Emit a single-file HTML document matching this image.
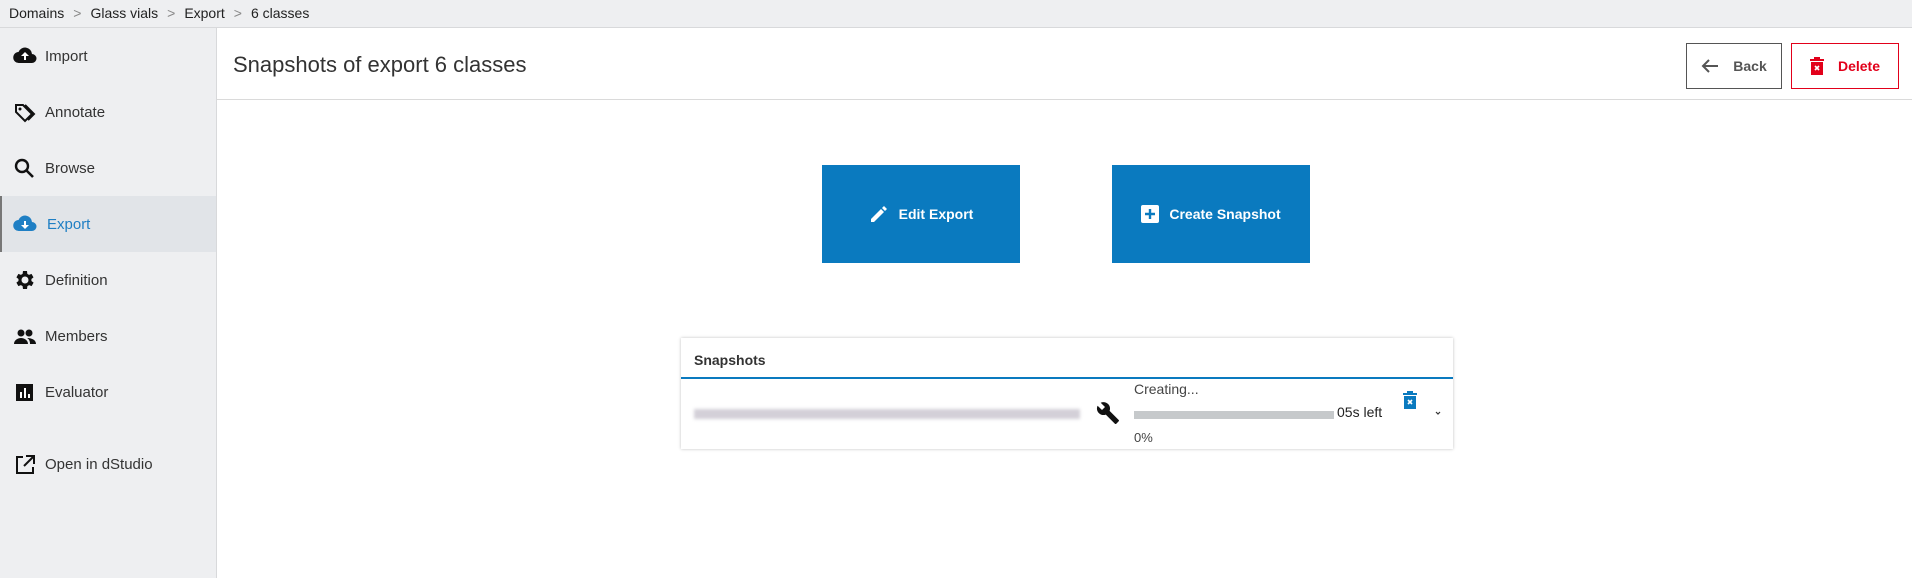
<!DOCTYPE html>
<html><head><style>
*{box-sizing:border-box;margin:0;padding:0}
body{width:1912px;height:578px;overflow:hidden;font-family:"Liberation Sans",sans-serif;background:#fff;color:#222;position:relative}
.bc{position:absolute;left:0;top:0;width:1912px;height:28px;background:#eeeff1;border-bottom:1px solid #d8d9db;font-size:14px;line-height:27px;padding-left:9px;color:#222}
.bc span.s{color:#888;margin:0 9px}
.sb{position:absolute;left:0;top:28px;width:217px;height:550px;background:#eeeff1;border-right:1px solid #d8d9db}
.it{position:absolute;left:0;width:216px;height:56px;font-size:15px;color:#333;display:flex;align-items:center;padding-left:45px}
.it svg{position:absolute;left:13px;top:18px}
.it.act{background:#e1e4e8;color:#1f7fc4;border-left:2px solid #777}
.hd{position:absolute;left:217px;top:28px;right:0;height:72px;border-bottom:1px solid #dadada}
.hd h1{position:absolute;left:16px;top:24px;font-size:22px;font-weight:normal;color:#333}
.btn{position:absolute;top:15px;height:46px;font-size:14px;font-weight:bold;display:flex;align-items:center;justify-content:center;gap:14px}
.big{position:absolute;top:165px;width:198px;height:98px;background:#0a7abf;color:#fff;font-weight:bold;font-size:14px;display:flex;align-items:center;justify-content:center;gap:10px}
.card{position:absolute;left:681px;top:338px;width:772px;height:111px;box-shadow:0 0 3px rgba(0,0,0,.25);background:#fff}
</style></head><body>
<div class="bc">Domains<span class="s">&gt;</span>Glass vials<span class="s">&gt;</span>Export<span class="s">&gt;</span>6 classes</div>
<div class="sb">
<div class="it" style="top:0"><svg width="24" height="20" viewBox="0 0 24 20"><path d="M19 8A7 7 0 0 0 5.5 6 5.5 5.5 0 0 0 6 17h13a4.5 4.5 0 0 0 0-9z" fill="#111"/><path d="M12 6l-4 4h3v4h2v-4h3z" fill="#fff"/></svg>Import</div>
<div class="it" style="top:56px"><svg width="24" height="22" viewBox="0 0 24 22"><path d="M3 3h7l9 9-7 7-9-9z" fill="none" stroke="#111" stroke-width="2"/><path d="M12 3l9 9-6 6" fill="none" stroke="#111" stroke-width="2"/><circle cx="7" cy="7" r="1.5" fill="#111"/></svg>Annotate</div>
<div class="it" style="top:112px"><svg width="24" height="22" viewBox="0 0 24 22"><circle cx="9" cy="8" r="6" fill="none" stroke="#111" stroke-width="2.4"/><path d="M13 12l7 7" stroke="#111" stroke-width="2.6"/></svg>Browse</div>
<div class="it act" style="top:168px"><svg width="24" height="20" viewBox="0 0 24 20" style="left:11px"><path d="M19 8A7 7 0 0 0 5.5 6 5.5 5.5 0 0 0 6 17h13a4.5 4.5 0 0 0 0-9z" fill="#1f7fc4"/><path d="M12 15l-4-4h3V7h2v4h3z" fill="#fff"/></svg>Export</div>
<div class="it" style="top:224px"><svg width="24" height="24" viewBox="0 0 24 24" style="top:16px"><path d="M19.4 13a7.5 7.5 0 0 0 0-2l2.1-1.6-2-3.5-2.5 1a7 7 0 0 0-1.7-1L15 3h-4l-.4 2.9a7 7 0 0 0-1.7 1l-2.5-1-2 3.5L6.5 11a7.5 7.5 0 0 0 0 2l-2.1 1.6 2 3.5 2.5-1a7 7 0 0 0 1.7 1L11 21h4l.4-2.9a7 7 0 0 0 1.7-1l2.5 1 2-3.5zM13 15.5a3.5 3.5 0 1 1 0-7 3.5 3.5 0 0 1 0 7z" fill="#111" transform="translate(-1 0)"/></svg>Definition</div>
<div class="it" style="top:280px"><svg width="24" height="22" viewBox="0 0 24 22"><circle cx="8" cy="7" r="3.5" fill="#111"/><circle cx="16" cy="7" r="3.5" fill="#111"/><path d="M1 18c0-4 4-6 7-6s7 2 7 6zM14 12c3 0 9 1 9 6h-6c0-3-1-5-3-6z" fill="#111"/></svg>Members</div>
<div class="it" style="top:336px"><svg width="24" height="22" viewBox="0 0 24 22"><rect x="3" y="2" width="17" height="17" fill="#111"/><rect x="7" y="10" width="2" height="6" fill="#fff"/><rect x="11" y="6" width="2" height="10" fill="#fff"/><rect x="15" y="12" width="2" height="4" fill="#fff"/></svg>Evaluator</div>
<div class="it" style="top:408px"><svg width="24" height="22" viewBox="0 0 24 22"><path d="M10 3H4v16h16v-6" fill="none" stroke="#111" stroke-width="2"/><path d="M13 2h8v8M21 2l-10 10" fill="none" stroke="#111" stroke-width="2"/></svg>Open in dStudio</div>
</div>
<div class="hd"><h1>Snapshots of export 6 classes</h1>
<div class="btn" style="left:1469px;width:96px;border:1px solid #555;color:#555"><svg width="18" height="16" viewBox="0 0 18 16"><path d="M17 8H2M8 2L2 8l6 6" fill="none" stroke="#555" stroke-width="2"/></svg>Back</div>
<div class="btn" style="left:1574px;width:108px;border:1px solid #e2001a;color:#e2001a"><svg width="14" height="18" viewBox="0 0 14 18"><rect x="0" y="2" width="14" height="2" fill="#e2001a"/><rect x="4" y="0" width="6" height="3" fill="#e2001a"/><rect x="1" y="5" width="12" height="13" fill="#e2001a"/><path d="M5 9l4 4M9 9l-4 4" stroke="#fff" stroke-width="1.6"/></svg>Delete</div>
</div>
<div class="big" style="left:822px"><svg width="20" height="20" viewBox="0 0 20 20"><path d="M2 15v3h3l10-10-3-3zM13 4l3 3 2-2-3-3z" fill="#fff"/></svg>Edit Export</div>
<div class="big" style="left:1112px"><svg width="18" height="18" viewBox="0 0 18 18"><rect width="18" height="18" rx="2" fill="#fff"/><path d="M9 4v10M4 9h10" stroke="#0a7abf" stroke-width="2.4"/></svg>Create Snapshot</div>
<div class="card">
<div style="position:absolute;left:13px;top:14px;font-size:14px;font-weight:bold;color:#333">Snapshots</div>
<div style="position:absolute;left:0;top:39px;width:100%;height:2px;background:#0a7abf"></div>
<div style="position:absolute;left:13px;top:71px;width:386px;height:10px;background:#d3d0d8;filter:blur(1.5px)"></div>
<svg style="position:absolute;left:415px;top:63px" width="24" height="24" viewBox="0 0 24 24"><path d="M22.7 19l-9.1-9.1c.9-2.3.4-5-1.5-6.9-2-2-5-2.4-7.4-1.3L9 6 6 9 1.6 4.7C.4 7.1.9 10.1 2.9 12.1c1.9 1.9 4.6 2.4 6.9 1.5l9.1 9.1c.4.4 1 .4 1.4 0l2.3-2.3c.5-.4.5-1.1.1-1.4z" fill="#111"/></svg>
<div style="position:absolute;left:453px;top:43px;font-size:14px;color:#444">Creating...</div>
<div style="position:absolute;left:453px;top:73px;width:200px;height:8px;background:#c6c9cb"></div>
<div style="position:absolute;left:656px;top:66px;font-size:14px;color:#222">05s left</div>
<div style="position:absolute;left:453px;top:92px;font-size:13px;color:#444">0%</div>
<svg style="position:absolute;left:722px;top:53px" width="14" height="18" viewBox="0 0 14 18"><rect x="0" y="2" width="14" height="2" fill="#0a7abf"/><rect x="4" y="0" width="6" height="3" fill="#0a7abf"/><rect x="1" y="5" width="12" height="13" fill="#0a7abf"/><path d="M5 9l4 4M9 9l-4 4" stroke="#fff" stroke-width="1.6"/></svg>
<svg style="position:absolute;left:754px;top:73px" width="6" height="5" viewBox="0 0 6 5"><path d="M1 1l2 2 2-2" fill="none" stroke="#333" stroke-width="1.2"/></svg>
</div>
</body></html>
